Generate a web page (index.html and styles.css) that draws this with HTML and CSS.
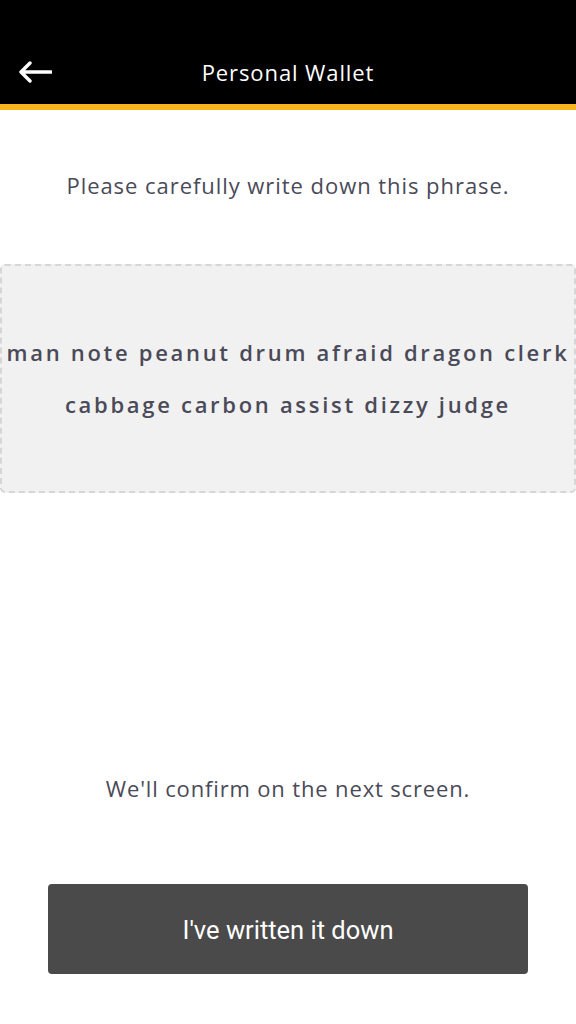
FILE: index.html
```html
<!DOCTYPE html>
<html>
<head>
<meta charset="utf-8">
<link rel="stylesheet" href="styles.css">
</head>
<body>
<div class="screen">
  <header class="topbar">
    <svg class="back" width="34" height="22" viewBox="0 0 34 22"><path d="M33 11H3M12 2L3 11L12 20" fill="none" stroke="#fff" stroke-width="3.4" stroke-linecap="round" stroke-linejoin="round"/></svg>
    <h1 class="title">Personal Wallet</h1>
  </header>
  <main class="content">
    <p class="intro">Please carefully write down this phrase.</p>
    <div class="phrase">
      <p class="words"><span class="line">man note peanut drum afraid dragon clerk</span> <span class="line">cabbage carbon assist dizzy judge</span></p>
    </div>
    <p class="confirm">We'll confirm on the next screen.</p>
    <button class="cta">I've written it down</button>
  </main>
</div>
</body>
</html>
```
FILE: styles.css
```css
* { box-sizing: border-box; }
html, body { margin: 0; padding: 0; background: #fff; }
.screen {
  width: 576px;
  height: 1024px;
  display: flex;
  flex-direction: column;
  font-family: "Open Sans", "Lato", sans-serif;
}
.topbar {
  height: 110px;
  background: #000;
  border-bottom: 6px solid #f8b61c;
  position: relative;
  display: flex;
  align-items: center;
  justify-content: center;
  padding-top: 40px;
}
.back {
  position: absolute;
  left: 18px;
  top: 61px;
}
.title {
  margin: 0;
  color: #fff;
  font-weight: 400;
  font-size: 22px;
  letter-spacing: 0.9px;
}
.content {
  display: flex;
  flex-direction: column;
  align-items: center;
}
.intro {
  margin: 60px 0 0;
  font-size: 22px;
  line-height: 30px;
  color: #4a4a58;
  letter-spacing: 0.95px;
}
.phrase {
  margin-top: 64px;
  width: 576px;
  height: 229px;
  background: #f1f1f1;
  border: 2px dashed #d6d6d6;
  border-radius: 5px;
  display: flex;
  align-items: center;
  justify-content: center;
  padding-bottom: 2px;
}
.words {
  margin: 0;
  text-align: center;
  font-size: 22px;
  font-weight: 600;
  line-height: 52px;
  letter-spacing: 2.7px;
  color: #4a4a58;
}
.line {
  display: block;
  white-space: nowrap;
}
.confirm {
  margin: 280px 0 0;
  font-size: 22px;
  line-height: 30px;
  color: #4a4a58;
  letter-spacing: 0.85px;
}
.cta {
  margin-top: 81px;
  width: 480px;
  height: 90px;
  background: #4a4a4a;
  border: none;
  border-radius: 4px;
  color: #fff;
  font-family: "Roboto", sans-serif;
  font-size: 25.5px;
  padding-top: 3px;
}
```
